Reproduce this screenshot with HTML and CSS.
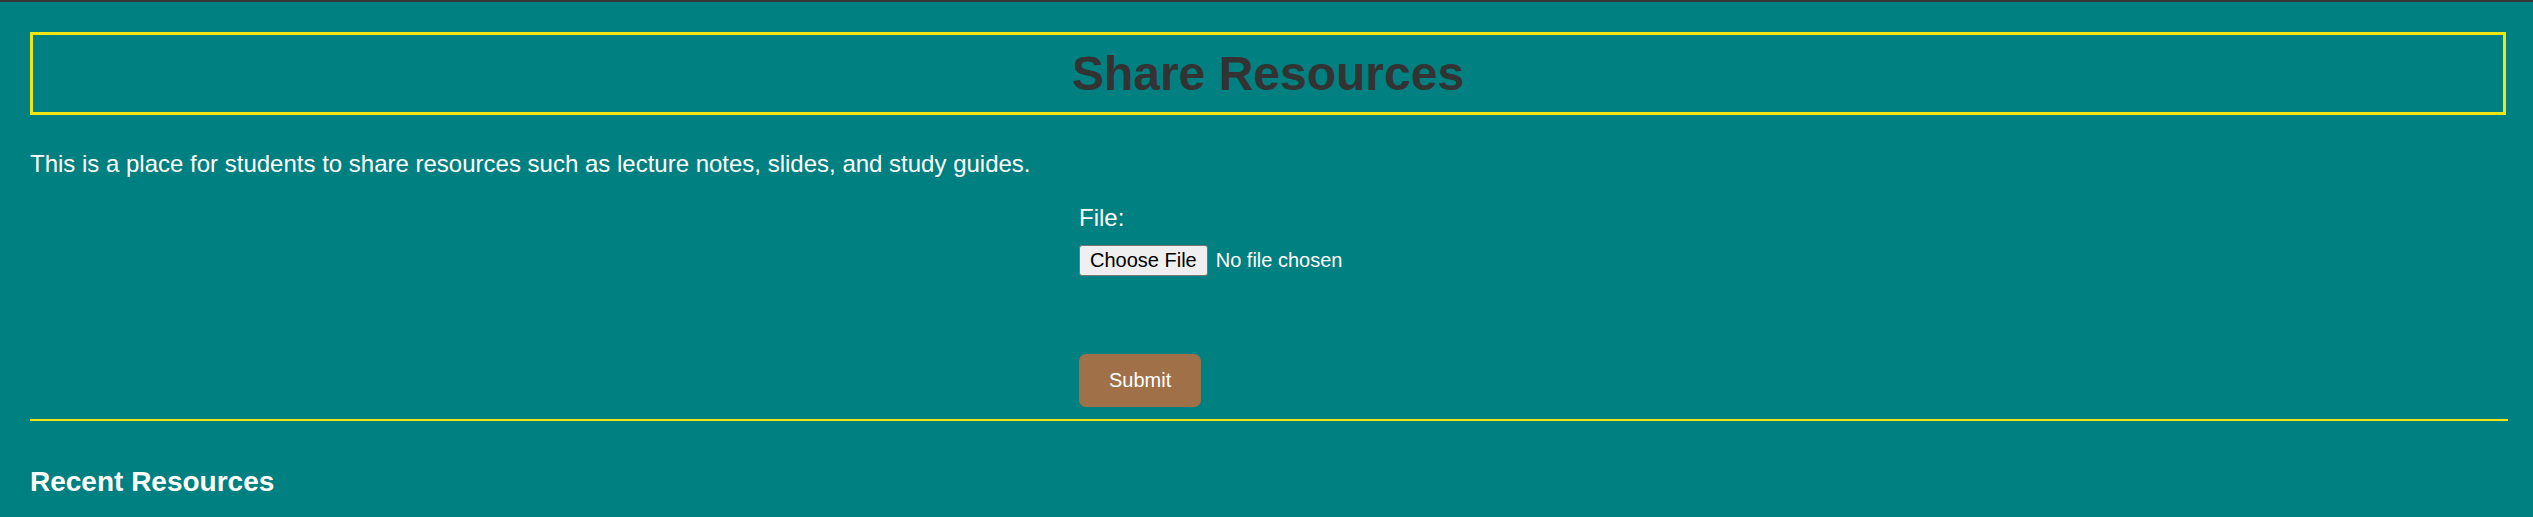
FILE: index.html
```html
<!DOCTYPE html>
<html lang="en">
<head>
<meta charset="utf-8">
<title>Share Resources</title>
<link rel="stylesheet" href="styles.css">
</head>
<body>
  <header class="title-box">
    <h1 class="title">Share Resources</h1>
  </header>
  <p class="intro">This is a place for students to share resources such as lecture notes, slides, and study guides.</p>
  <form class="upload">
    <label class="upload-label" for="file">File:</label>
    <input class="upload-input" type="file" id="file">
    <button class="upload-submit" type="button">Submit</button>
  </form>
  <hr class="divider">
  <h3 class="recent-title">Recent Resources</h3>
</body>
</html>
```

FILE: styles.css
```css
html, body {
  height: 100%;
}

body {
  margin: 0;
  border-top: 2px solid #383838;
  padding: 30px 25px 0 30px;
  background: #008080;
  color: #ffffff;
  font-family: "Liberation Sans", Arial, sans-serif;
  font-size: 24px;
  box-sizing: border-box;
}

.title-box {
  border: 3px solid #eee512;
  padding: 11px;
  margin-right: 2px;
  text-align: center;
}

.title {
  margin: 0;
  font-size: 48px;
  font-weight: bold;
  color: #333333;
  line-height: 55px;
}

.intro {
  margin: 35px 0 0;
  font-size: 24px;
}

.upload {
  width: 380px;
  margin: 26px auto 0;
  display: flex;
  flex-direction: column;
  align-items: flex-start;
}

.upload-label {
  display: block;
  font-size: 24px;
  line-height: 28px;
  margin-bottom: 13px;
}

.upload-input {
  display: block;
  height: 31px;
  padding: 0;
  font-family: "Liberation Sans", Arial, sans-serif;
  font-size: 20px;
  line-height: 31px;
  color: #ffffff;
}

.upload-input::file-selector-button {
  font-family: "Liberation Sans", Arial, sans-serif;
  font-size: 20px;
  color: #000000;
  background: #efefef;
  border: 1px solid #767676;
  border-radius: 3px;
  padding: 3px 10px;
  margin-right: 8px;
  height: 31px;
}

.upload-submit {
  margin-top: 78px;
  height: 53px;
  padding: 0 30px;
  border: none;
  border-radius: 7px;
  background: #a07048;
  color: #ffffff;
  font-family: "Liberation Sans", Arial, sans-serif;
  font-size: 20px;
}

.divider {
  margin: 12px 0 0;
  border: 0;
  height: 2px;
  background: #eee512;
}

.recent-title {
  margin: 45px 0 0;
  font-size: 28px;
  font-weight: bold;
}
```
